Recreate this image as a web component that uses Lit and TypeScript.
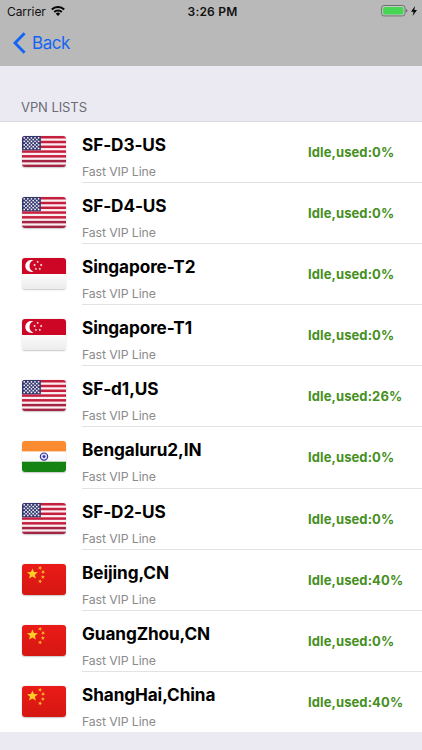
import { LitElement, html, css, svg } from "lit";
import { customElement, property } from "lit/decorators.js";

type Country = "us" | "sg" | "in" | "cn";

interface Server {
  name: string;
  country: Country;
  used: number;
}

const SERVERS: Server[] = [
  { name: "SF-D3-US", country: "us", used: 0 },
  { name: "SF-D4-US", country: "us", used: 0 },
  { name: "Singapore-T2", country: "sg", used: 0 },
  { name: "Singapore-T1", country: "sg", used: 0 },
  { name: "SF-d1,US", country: "us", used: 26 },
  { name: "Bengaluru2,IN", country: "in", used: 0 },
  { name: "SF-D2-US", country: "us", used: 0 },
  { name: "Beijing,CN", country: "cn", used: 40 },
  { name: "GuangZhou,CN", country: "cn", used: 0 },
  { name: "ShangHai,China", country: "cn", used: 40 },
];

const starPoints = (cx: number, cy: number, r: number, turn = 0) =>
  Array.from({ length: 10 }, (_, i) => {
    const radius = i % 2 ? r * 0.45 : r;
    const a = ((i * 36 - 90 + turn) * Math.PI) / 180;
    return `${(cx + radius * Math.cos(a)).toFixed(2)},${(cy + radius * Math.sin(a)).toFixed(2)}`;
  }).join(" ");

const star = (cx: number, cy: number, r: number, fill: string, turn = 0) =>
  svg`<polygon points=${starPoints(cx, cy, r, turn)} fill=${fill}></polygon>`;

const FLAGS: Record<Country, () => unknown> = {
  us: () => svg`
    <rect width="43" height="31" fill="#fbeef1"></rect>
    ${[0, 1, 2, 3, 4, 5, 6].map(
      (i) => svg`<rect y=${i * 4.77} width="43" height="2.5" fill=${i > 4 ? "#a32443" : "#c41f3f"}></rect>`
    )}
    <rect width="18.4" height="14.2" fill="#34366d"></rect>
    ${[0, 1, 2, 3, 4, 5, 6].map((r) =>
      Array.from({ length: r % 2 ? 4 : 5 }, (_, c) =>
        svg`<circle cx=${2.2 + c * 3.5 + (r % 2 ? 1.75 : 0)} cy=${1.8 + r * 1.78} r="0.88" fill="#f1f1fa"></circle>`
      )
    )}`,
  sg: () => svg`
    <rect width="43" height="31" fill="url(#silver)"></rect>
    <rect width="43" height="16" fill="#cd0626"></rect>
    <path d="M11.4 2.3A6 6 0 1 0 11.4 13.5A5.9 5.9 0 0 1 11.4 2.3Z" fill="#fff"></path>
    ${star(15.3, 3.9, 1.4, "#fff")}${star(12.3, 7, 1.4, "#fff")}${star(18.7, 7, 1.4, "#fff")}
    ${star(13.6, 10.9, 1.4, "#fff")}${star(17.4, 10.9, 1.4, "#fff")}`,
  in: () => svg`
    <rect width="43" height="31" fill="url(#silver)"></rect>
    <rect width="43" height="10.4" fill="#fb8b30"></rect>
    <rect y="20.7" width="43" height="10.3" fill="#158313"></rect>
    <circle cx="21.5" cy="15.6" r="3.6" fill="#dcdcf4" stroke="#3030a0" stroke-width="1.1"></circle>
    <circle cx="21.5" cy="15.6" r="1.4" fill="#3030a0"></circle>`,
  cn: () => svg`
    <rect width="43" height="31" fill="url(#red)"></rect>
    ${star(10.2, 10, 5.6, "#ffce25")}${star(17.6, 3.9, 2.1, "#fcb529", 20)}
    ${star(20.6, 8, 2.1, "#fcb529", 40)}${star(20.4, 13, 2.1, "#fcb529")}${star(17.6, 17.4, 2.1, "#fcb529", 20)}`,
};

@customElement("country-flag")
export class CountryFlag extends LitElement {
  @property() country: Country = "us";

  static styles = css`
    :host { display: block; width: 44px; height: 31px; }
    .flag {
      display: block; width: 44px; height: 31px; border-radius: 3px;
      box-shadow: 0 0.5px 1.5px rgba(0, 0, 0, 0.22);
    }
  `;

  render() {
    return html`<svg class="flag" viewBox="0 0 43 31" preserveAspectRatio="none">
      <defs>
        <linearGradient id="silver" x2="0" y2="1">
          <stop offset="0.4" stop-color="#fff"></stop><stop offset="1" stop-color="#ececec"></stop>
        </linearGradient>
        <linearGradient id="red" x2="0" y2="1">
          <stop stop-color="#ea1b18"></stop><stop offset="1" stop-color="#d51712"></stop>
        </linearGradient>
      </defs>
      ${FLAGS[this.country]()}
    </svg>`;
  }
}

@customElement("server-row")
export class ServerRow extends LitElement {
  @property({ attribute: false }) server!: Server;

  static styles = css`
    :host { display: block; }
    .row { display: flex; height: 100%; box-sizing: border-box; padding-left: 22px; }
    .flag { margin-top: 15px; }
    .body {
      flex: 1; display: flex; margin-left: 16px; box-sizing: border-box;
      border-top: 1px solid #e3e3e5;
    }
    :host(:first-child) .body { border-top-color: transparent; }
    .info { width: 226px; white-space: nowrap; }
    .name {
      margin-top: 12px; font-size: 17.2px; line-height: 22px; font-weight: 700; color: #000;
      letter-spacing: -0.1px;
    }
    .line { margin-top: 8px; font-size: 12.3px; line-height: 16px; color: #8b8b8b; letter-spacing: -0.12px; }
    .status {
      margin-top: 22px; font-size: 13px; line-height: 16px; font-weight: 700; color: #468f22;
      letter-spacing: 0.1px; white-space: nowrap;
    }
  `;

  render() {
    const { name, country, used } = this.server;
    return html`<div class="row">
      <country-flag class="flag" .country=${country}></country-flag>
      <div class="body">
        <div class="info">
          <div class="name">${name}</div>
          <div class="line">Fast VIP Line</div>
        </div>
        <div class="status">Idle,used:${used}%</div>
      </div>
    </div>`;
  }
}

@customElement("app-root")
export class AppRoot extends LitElement {
  static styles = css`
    :host {
      display: flex; flex-direction: column; width: 422px; height: 750px; overflow: hidden;
      background: #ebeaf3; font-family: Inter, "Liberation Sans", sans-serif;
    }
    .header { height: 66px; background: #b9b9b9; }
    .status-bar {
      display: grid; grid-template-columns: 1fr auto 1fr; align-items: center;
      height: 22px; padding: 0 5px 0 7px; font-size: 12px; color: #111;
    }
    .carrier { display: flex; align-items: center; gap: 5.5px; letter-spacing: -0.08px; }
    .clock { font-weight: 600; letter-spacing: 0.2px; padding-left: 1px; }
    .power { display: flex; align-items: center; justify-content: flex-end; gap: 3px; }
    .icon { display: block; }
    .nav { display: flex; align-items: center; height: 42px; padding-left: 13px; gap: 6px; color: #1264f4; }
    .back { font-size: 17px; line-height: 22px; letter-spacing: -0.45px; }
    .section {
      height: 55px; box-sizing: border-box; padding: 33px 0 0 21px;
      font-size: 13px; line-height: 16px; color: #6b6b73; letter-spacing: -0.08px;
    }
    .list {
      display: grid; grid-auto-rows: 1fr; height: 611px;
      background: #fff; box-shadow: inset 0 1px #dcdce0;
    }
  `;

  render() {
    return html`
      <div class="header">
        <div class="status-bar">
          <div class="carrier">
            <span>Carrier</span>
            <svg class="icon" width="14" height="10" viewBox="0 0 14 10">
              <g fill="none" stroke="#050505" stroke-width="1.9">
                <path d="M0.8 3.5A8.8 8.8 0 0 1 13.2 3.5"></path>
                <path d="M3.2 6A5.4 5.4 0 0 1 10.8 6"></path>
              </g>
              <path d="M7 10L4.8 7.7A3.1 3.1 0 0 1 9.2 7.7Z" fill="#050505"></path>
            </svg>
          </div>
          <span class="clock">3:26 PM</span>
          <div class="power">
            <svg class="icon" width="27" height="12" viewBox="0 0 27 12">
              <rect x="0.6" y="0.5" width="23.4" height="10.4" rx="2.3" fill="#c5c9c5" stroke="#707070"></rect>
              <rect x="2.1" y="1.9" width="20.3" height="7.6" rx="1" fill="#47d653"></rect>
              <path d="M25 3.9Q26.5 4.4 26.5 5.7T25 7.5Z" fill="#707070"></path>
            </svg>
            <svg class="icon" width="6" height="10" viewBox="0 0 6 10">
              <path d="M4 0L0 5.7H2.6L1.6 10L6 4H3.3Z" fill="#050505"></path>
            </svg>
          </div>
        </div>
        <div class="nav">
          <svg class="icon" width="13" height="22" viewBox="0 0 13 22">
            <path d="M11.6 1.2L2 11L11.6 20.8" fill="none" stroke="#1264f4" stroke-width="2.9"></path>
          </svg>
          <span class="back">Back</span>
        </div>
      </div>
      <div class="section">VPN LISTS</div>
      <div class="list">
        ${SERVERS.map((s) => html`<server-row .server=${s}></server-row>`)}
      </div>
    `;
  }
}
